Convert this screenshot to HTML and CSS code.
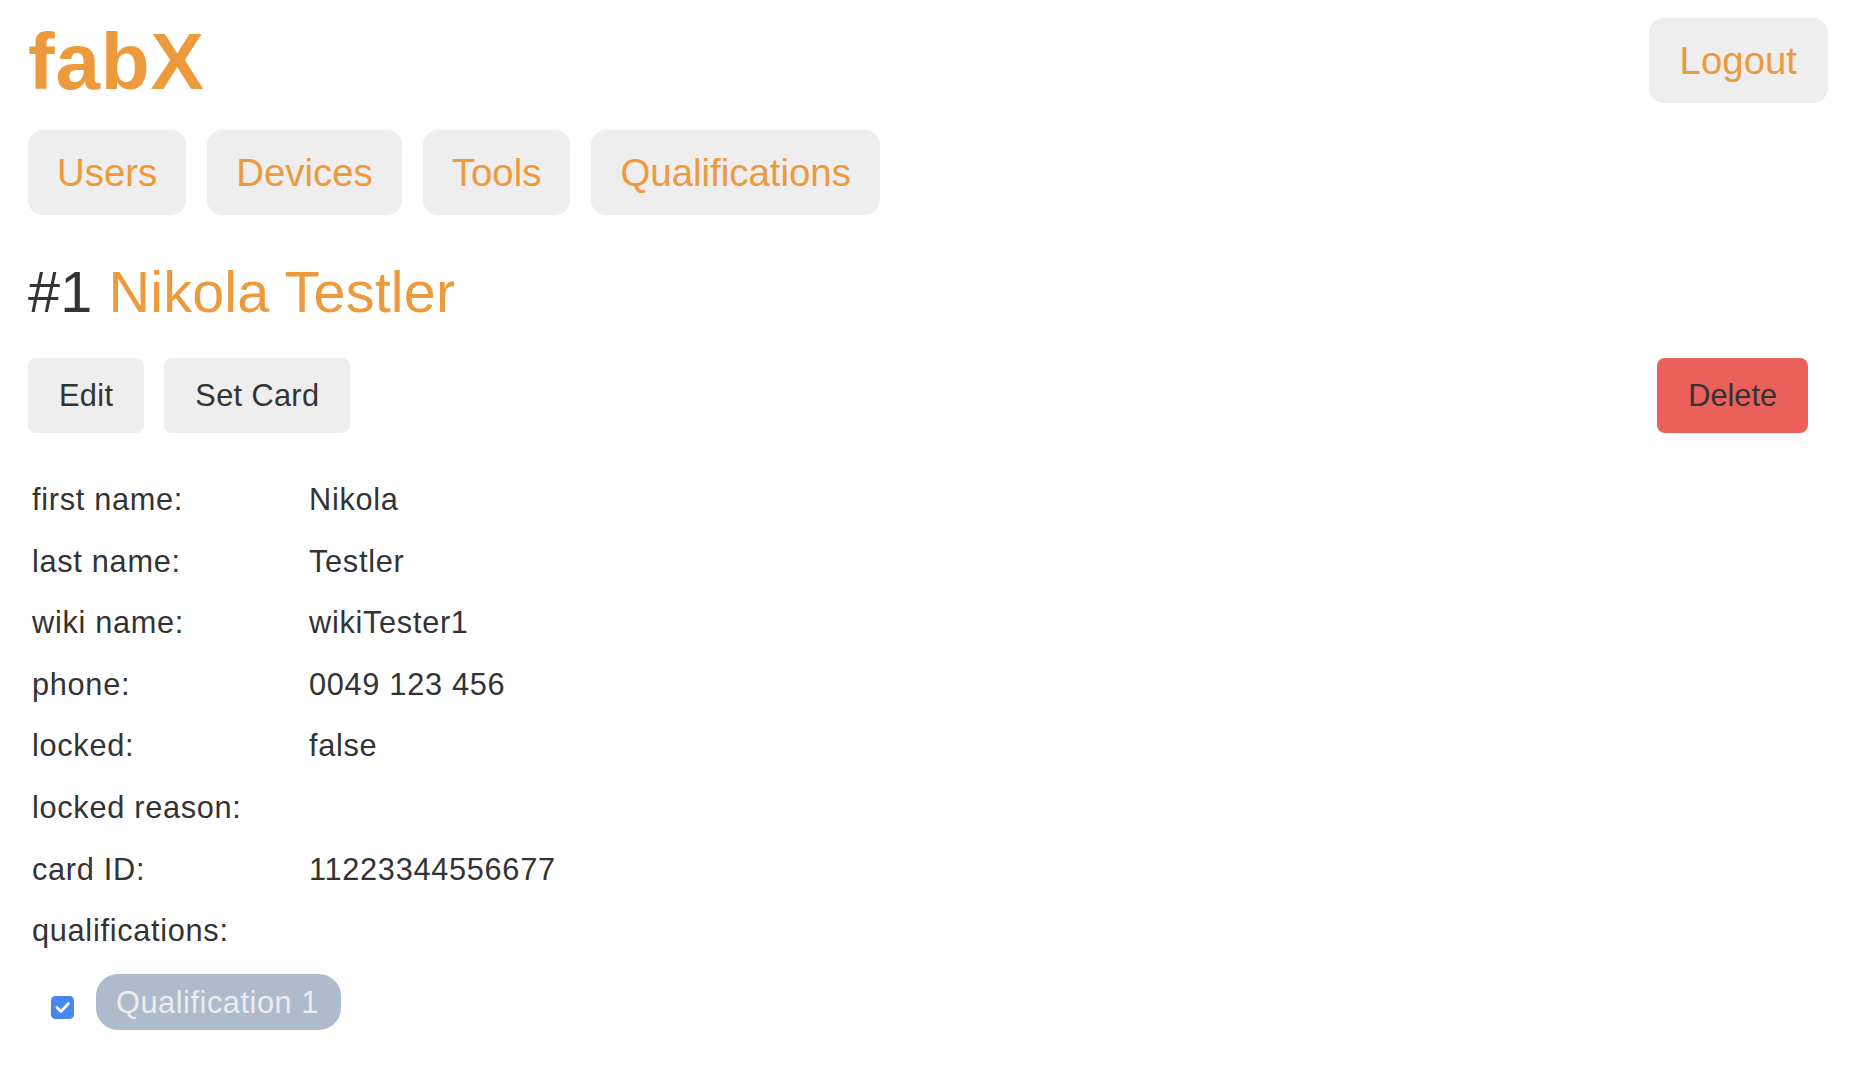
FILE: index.html
```html
<!DOCTYPE html>
<html lang="en">
<head>
<meta charset="utf-8">
<title>fabX - Nikola Testler</title>
<link rel="stylesheet" href="styles.css">
</head>
<body>
<div class="page">
  <header class="header">
    <h1 class="logo">fabX</h1>
    <a class="btn btn-nav btn-logout" href="#">Logout</a>
  </header>
  <nav class="nav">
    <a class="btn btn-nav" href="#">Users</a>
    <a class="btn btn-nav" href="#">Devices</a>
    <a class="btn btn-nav" href="#">Tools</a>
    <a class="btn btn-nav" href="#">Qualifications</a>
  </nav>
  <h2 class="title"><span class="title-id">#1</span> <span class="title-name">Nikola Testler</span></h2>
  <div class="actions">
    <div class="actions-left">
      <button class="btn btn-action">Edit</button>
      <button class="btn btn-action">Set Card</button>
    </div>
    <button class="btn btn-action btn-danger">Delete</button>
  </div>
  <div class="details">
    <div class="label">first name:</div><div class="value">Nikola</div>
    <div class="label">last name:</div><div class="value">Testler</div>
    <div class="label">wiki name:</div><div class="value">wikiTester1</div>
    <div class="label">phone:</div><div class="value">0049 123 456</div>
    <div class="label">locked:</div><div class="value">false</div>
    <div class="label">locked reason:</div><div class="value"></div>
    <div class="label">card ID:</div><div class="value">11223344556677</div>
    <div class="label">qualifications:</div><div class="value"></div>
  </div>
  <ul class="quals">
    <li class="qual">
      <span class="checkbox" role="checkbox" aria-checked="true">
        <svg viewBox="0 0 23 23" width="23" height="23" aria-hidden="true">
          <rect x="0" y="0" width="23" height="23" rx="4.5" fill="#4a86f0"/>
          <path d="M6 11.5 L10 15.5 L17.5 7.5" fill="none" stroke="#ffffff" stroke-width="2.6" stroke-linecap="round" stroke-linejoin="round"/>
        </svg>
      </span>
      <span class="pill">Qualification 1</span>
    </li>
  </ul>
</div>
</body>
</html>
```

FILE: styles.css
```css
html, body {
  margin: 0;
  padding: 0;
  background: #ffffff;
}

body {
  font-family: "Liberation Sans", Arial, Helvetica, sans-serif;
  color: #333333;
  font-size: 30.72px;
}

.page {
  padding: 16px 28px 0 28px;
}

.header {
  display: flex;
  justify-content: space-between;
  align-items: flex-start;
}

.logo {
  margin: 0;
  font-size: 80px;
  line-height: 92px;
  font-weight: bold;
  letter-spacing: 0.8px;
  color: #ed9a3c;
}

.btn {
  display: inline-block;
  border: none;
  background: #eeeeee;
  font-family: inherit;
  text-decoration: none;
  cursor: pointer;
  box-sizing: border-box;
}

.btn-nav {
  font-size: 38.4px;
  line-height: 45px;
  padding: 20px 29px;
  border-radius: 15px;
  color: #ed9a3c;
}

.btn-logout {
  margin-top: 2px;
  padding: 20px 31px;
}

.nav {
  display: flex;
  gap: 21px;
  margin-top: 22px;
}

.title {
  margin: 44px 0 0 0;
  font-size: 57.6px;
  line-height: 66px;
  font-weight: normal;
  letter-spacing: 0.15px;
}

.title-id {
  color: #333333;
}

.title-name {
  color: #ed9a3c;
}

.actions {
  display: flex;
  justify-content: space-between;
  align-items: center;
  margin-top: 33px;
}

.actions-left {
  display: flex;
  gap: 20px;
}

.btn-action {
  font-size: 30.72px;
  line-height: 35px;
  padding: 20px 31px;
  border-radius: 8px;
  letter-spacing: 0.35px;
  color: #333333;
}

.btn-danger {
  background: #ec605b;
  margin-right: 20px;
  letter-spacing: 0;
}

.details {
  display: grid;
  grid-template-columns: 277px 1fr;
  row-gap: 25.6px;
  margin-top: 49px;
  padding-left: 4px;
  line-height: 36px;
  letter-spacing: 0.7px;
}

.label,
.value {
  min-height: 36px;
}

.quals {
  list-style: none;
  margin: 25px 0 0 0;
  padding: 0 0 0 22.5px;
}

.qual {
  display: flex;
  align-items: flex-start;
  gap: 22.5px;
}

.checkbox {
  display: block;
  width: 23px;
  height: 23px;
  margin-top: 22px;
}

.checkbox svg {
  display: block;
}

.pill {
  display: inline-block;
  background: #aebbcc;
  color: #ececec;
  font-size: 30.72px;
  line-height: 36px;
  padding: 11px 22px 9px 20px;
  border-radius: 22px;
  letter-spacing: 0.55px;
}
```
